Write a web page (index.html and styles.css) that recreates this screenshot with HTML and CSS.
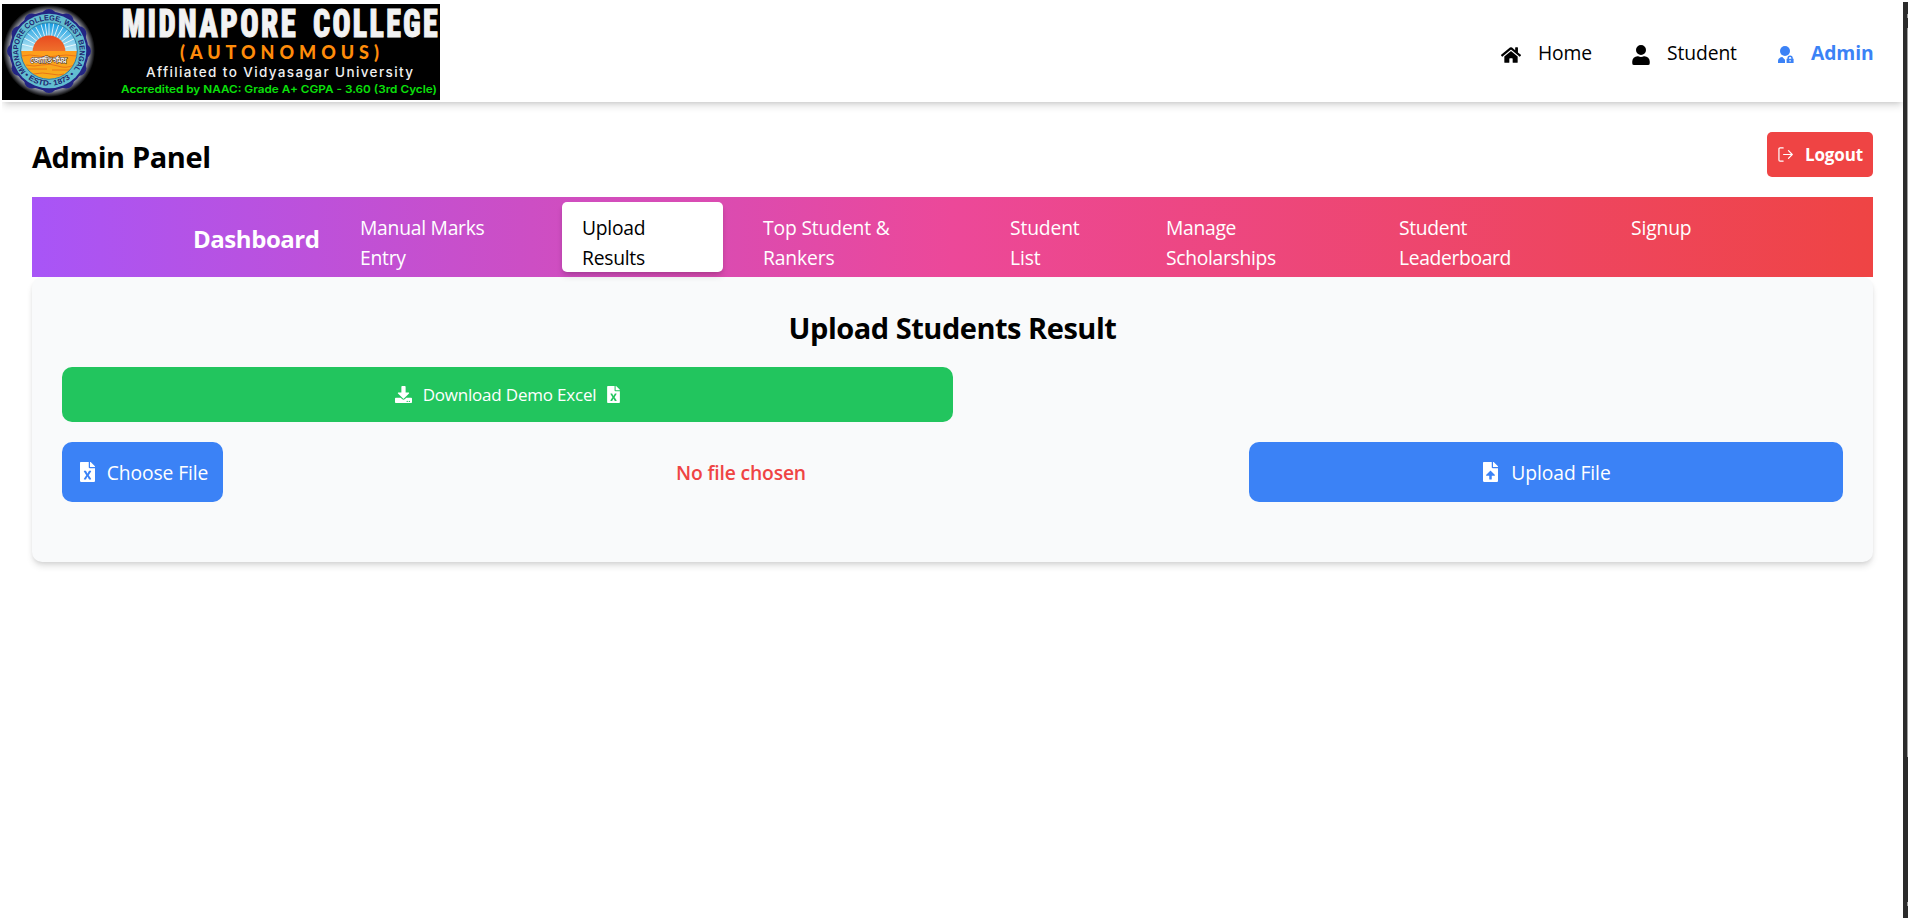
FILE: index.html
```html
<!DOCTYPE html>
<html lang="en">
<head>
<meta charset="utf-8">
<title>Admin Panel</title>
<link rel="stylesheet" href="styles.css">
</head>
<body>
<svg class="sprite" aria-hidden="true">
  <symbol id="excel" viewBox="0 0 384 512"><path fill="currentColor" d="M224 136V0H24C10.700 0 0 10.700 0 24v464c0 13.300 10.700 24 24 24h336c13.300 0 24-10.700 24-24V160H248c-13.200 0-24-10.800-24-24zm60.100 106.500L224 336l60.100 93.500c5.100 8-.6 18.500-10.100 18.500h-34.900c-4.400 0-8.500-2.400-10.600-6.300C208.900 405.500 192 373 192 373c-6.400 14.800-10 20-36.600 68.800-2.100 3.900-6.100 6.300-10.500 6.300H110c-9.500 0-15.200-10.500-10.100-18.500l60.300-93.500-60.300-93.500c-5.200-8 .6-18.500 10.100-18.500h34.800c4.400 0 8.500 2.400 10.600 6.300 26.100 48.800 20 33.600 36.600 68.500 0 0 6.100-11.700 36.600-68.500 2.100-3.900 6.200-6.300 10.600-6.300H274c9.500-.1 15.200 10.400 10.100 18.400zM384 121.900v6.100H256V0h6.100c6.400 0 12.500 2.500 17 7l97.900 98c4.500 4.500 7 10.600 7 16.900z"/></symbol>
</svg>
<div class="window">
<div class="page">
  <header class="header">
    <svg class="logo" viewBox="0 0 438 96">
      <defs>
        <radialGradient id="glow"><stop offset=".8" stop-color="#cfd3e6"/><stop offset="1" stop-color="#000"/></radialGradient>
        <linearGradient id="sky" x2="0" y2="1"><stop stop-color="#159be0"/><stop offset="1" stop-color="#bfeaf5"/></linearGradient>
        <linearGradient id="sun" x2="0" y2="1"><stop stop-color="#e84a20"/><stop offset="1" stop-color="#f79a38"/></linearGradient>
        <linearGradient id="sea" x2="0" y2="1"><stop stop-color="#ff9d1c"/><stop offset="1" stop-color="#f5b01c"/></linearGradient>
        <clipPath id="disc"><circle cx="47" cy="47" r="28"/></clipPath>
        <path id="arcTop" d="M24.100 67.500 A30.700 30.700 0 1 1 69.900 67.500"/>
        <path id="arcLow" d="M20.800 70 A35 35 0 0 0 73.200 70"/>
      </defs>
      <rect width="438" height="96" fill="#000"/>
      <circle cx="47" cy="47" r="46" fill="url(#glow)"/>
      <g fill="#232584">
        <circle cx="47" cy="47" r="39.500"/>
        <g id="lobes"><circle cx="47" cy="12.500" r="7.500"/><circle cx="64.200" cy="17.100" r="7.500"/><circle cx="76.900" cy="29.800" r="7.500"/><circle cx="81.500" cy="47" r="7.500"/><circle cx="76.900" cy="64.200" r="7.500"/><circle cx="64.200" cy="76.900" r="7.500"/></g>
        <use href="#lobes" transform="rotate(180 47 47)"/>
      </g>
      <circle cx="47" cy="47" r="37.300" fill="#62bdd0"/>
      <g clip-path="url(#disc)">
        <rect x="19" y="19" width="56" height="28" fill="url(#sky)"/>
        <path stroke="#fff" stroke-width=".8" d="M47 47L19 40M47 47L18 32M47 47L20 25M47 47L25 20M47 47L31 18M47 47L38 17M47 47L43 18M47 47L47 17M47 47L52 18M47 47L58 17M47 47L64 18M47 47L70 21M47 47L75 26M47 47L76 33M47 47L76 40"/>
        <circle cx="47" cy="48" r="16.500" fill="url(#sun)"/>
        <rect x="19" y="47" width="56" height="29" fill="url(#sea)"/>
        <path stroke="#e87517" fill="none" d="M20 52q8-2 16 0t18 0 20 0M24 61q8 2 16 0t16 1 16-1M25 65h20M50 66h19M31 70q10-2 18 0t13 0"/>
      </g>
      <circle cx="47" cy="47" r="28.300" fill="none" stroke="#236c9a" stroke-width=".8"/>
      <text class="seal-text"><textPath href="#arcTop" textLength="138" lengthAdjust="spacingAndGlyphs">MIDNAPORE COLLEGE, WEST BENGAL</textPath></text>
      <text class="seal-text"><textPath href="#arcLow" startOffset="2" textLength="56" lengthAdjust="spacingAndGlyphs">• ESTD- 1873 •</textPath></text>
      <text class="seal-motto" x="28" y="58.500" textLength="37" lengthAdjust="spacingAndGlyphs">জ্যোতির্গময়</text>
      <text class="name" x="120" y="33" textLength="176" lengthAdjust="spacingAndGlyphs">MIDNAPORE</text>
      <text class="name" x="311" y="33" textLength="127" lengthAdjust="spacingAndGlyphs">COLLEGE</text>
      <text class="auto" x="178" y="55" textLength="199" lengthAdjust="spacing">(AUTONOMOUS)</text>
      <text class="affil" x="144" y="73" textLength="267" lengthAdjust="spacing">Affiliated to Vidyasagar University</text>
      <text class="naac" x="119" y="89.200" textLength="316" lengthAdjust="spacingAndGlyphs">Accredited by NAAC: Grade A+ CGPA - 3.60 (3rd Cycle)</text>
    </svg>
    <nav class="nav">
      <a class="nav-link"><svg class="i-home" viewBox="0 0 576 512"><path fill="currentColor" d="M280.400 148.300L96 300.100V464a16 16 0 0 0 16 16l112.100-.3a16 16 0 0 0 15.900-16V368a16 16 0 0 1 16-16h64a16 16 0 0 1 16 16v95.600a16 16 0 0 0 16 16.100L464 480a16 16 0 0 0 16-16V300L295.700 148.300a12.200 12.200 0 0 0-15.300 0zM571.600 251.500L488 182.600V44.100a12 12 0 0 0-12-12h-56a12 12 0 0 0-12 12v72.600L318.500 43a48 48 0 0 0-61 0L4.300 251.500a12 12 0 0 0-1.600 16.900l25.500 31A12 12 0 0 0 45.200 301l235.200-193.700a12.200 12.200 0 0 1 15.300 0L530.900 301a12 12 0 0 0 16.900-1.600l25.500-31a12 12 0 0 0-1.700-16.900z"/></svg><span class="w-home">Home</span></a>
      <a class="nav-link"><svg class="i-user" viewBox="0 0 448 512"><path fill="currentColor" d="M224 256a128 128 0 1 0 0-256 128 128 0 0 0 0 256zm89.600 32h-16.700a174 174 0 0 1-145.800 0h-16.700A134.400 134.400 0 0 0 0 422.400V464a48 48 0 0 0 48 48h352a48 48 0 0 0 48-48v-41.600A134.400 134.400 0 0 0 313.600 288z"/></svg><span class="w-student">Student</span></a>
      <a class="nav-link current"><svg class="i-admin" viewBox="0 0 16 17"><circle cx="7" cy="5" r="5" fill="currentColor"/><path fill="currentColor" d="M0 17v-1.500C0 12.500 2 11 4.300 11L7 13.800V17z"/><path fill="currentColor" d="M8.600 12.800h.8v-.5a2.700 2.700 0 0 1 5.400 0v.5h.8V17h-7zM10.900 12.800h2.400v-.5a1.200 1.200 0 0 0-2.400 0zM11.400 14.200v1.400h1.400v-1.400z" fill-rule="evenodd"/></svg><span class="w-admin">Admin</span></a>
    </nav>
  </header>
  <main class="main">
    <div class="heading-row">
      <h1 class="title">Admin Panel</h1>
      <button class="logout"><svg class="i-out" viewBox="0 0 16 16" fill="none" stroke="currentColor" stroke-width="1.300" stroke-linecap="round" stroke-linejoin="round"><path d="M5.500 1H2.200Q1 1 1 2.200v11.600Q1 15 2.200 15h3.300M6 8h9M11.200 3.900L15.200 8l-4 4.100"/></svg><span>Logout</span></button>
    </div>
    <nav class="tabs">
      <h2 class="tabs-title">Dashboard</h2>
      <a class="tab t1">Manual Marks<br>Entry</a>
      <a class="tab t2 active">Upload<br>Results</a>
      <a class="tab t3">Top Student &amp;<br>Rankers</a>
      <a class="tab t4">Student<br>List</a>
      <a class="tab t5">Manage<br>Scholarships</a>
      <a class="tab t6">Student<br>Leaderboard</a>
      <a class="tab t7">Signup</a>
    </nav>
    <section class="panel">
      <h2 class="panel-title">Upload Students Result</h2>
      <button class="btn download"><svg class="i-down" viewBox="0 0 512 512"><path fill="currentColor" d="M216 0h80c13.300 0 24 10.700 24 24v168h87.700c17.800 0 26.700 21.500 14.100 34.100L269.700 378.300c-7.500 7.500-19.800 7.500-27.300 0L90.100 226.100C77.500 213.500 86.400 192 104.200 192H192V24c0-13.300 10.700-24 24-24zm296 376v112c0 13.300-10.700 24-24 24H24c-13.300 0-24-10.700-24-24V376c0-13.300 10.700-24 24-24h146.700l49 49c20.100 20.100 52.500 20.100 72.600 0l49-49H488c13.300 0 24 10.700 24 24zM388 464a20 20 0 1 0-40 0 20 20 0 0 0 40 0zm64 0a20 20 0 1 0-40 0 20 20 0 0 0 40 0z"/></svg><span>Download Demo Excel</span><svg class="i-xls-s"><use href="#excel"/></svg></button>
      <div class="actions">
        <button class="btn choose"><svg class="i-file"><use href="#excel"/></svg><span>Choose File</span></button>
        <span class="status">No file chosen</span>
        <button class="btn upload"><svg class="i-file" viewBox="0 0 384 512"><path fill="currentColor" fill-rule="evenodd" d="M224 136V0H24C10.700 0 0 10.700 0 24v464c0 13.300 10.700 24 24 24h336c13.300 0 24-10.700 24-24V160H248c-13.200 0-24-10.800-24-24zm65.200 216H224v80c0 8.800-7.200 16-16 16h-32c-8.800 0-16-7.200-16-16v-80H94.800c-14.300 0-21.400-17.300-11.300-27.400l96.400-95.700c6.700-6.600 17.400-6.600 24 0l96.400 95.700c10.200 10.100 3.100 27.400-11.100 27.400zM377 105L279.100 7c-4.500-4.500-10.600-7-17-7H256v128h128v-6.100c0-6.300-2.500-12.400-7-16.900z"/></svg><span>Upload File</span></button>
      </div>
    </section>
  </main>
</div>
<div class="scrollbar"><i class="cap"></i><div class="thumb"></div><i class="cap low"></i></div>
</div>
</body>
</html>
```
FILE: styles.css
```css
* { box-sizing: border-box; }
body { margin: 0; background: #fff; color: #000; font: 19.3px/30px "Open Sans", "Noto Sans", sans-serif; overflow: hidden; }
h1, h2 { margin: 0; }
button { border: 0; color: #fff; font: inherit; padding: 0; }
svg { display: block; flex: none; }
span { white-space: nowrap; }
.sprite { position: absolute; width: 0; height: 0; }
.window { display: flex; width: 1908px; height: 920px; padding: 2px 0 2px 2px; }
.page { flex: 1; overflow: hidden; }

.header { display: flex; justify-content: space-between; align-items: center; height: 100px; padding-right: 30px; background: #fff; box-shadow: 0 5px 7.5px -1px rgba(0,0,0,.13), 0 2.5px 5px -2.5px rgba(0,0,0,.13); }
.logo { width: 438px; height: 96px; overflow: visible; }
.seal-text { font: 700 7.500px "Liberation Sans", sans-serif; fill: #20246f; }
.seal-motto { font: 700 8px "Noto Sans", sans-serif; fill: #fff; stroke: #4a2c16; stroke-width: 1px; paint-order: stroke; }
.name { font: 900 39.500px "Roboto", sans-serif; font-stretch: condensed; letter-spacing: 3px; fill: #f2f2f2; stroke: #f2f2f2; stroke-width: 1px; }
.auto { font: 900 18px "Lato", sans-serif; fill: #ff8c0a; }
.affil { font: 500 13.500px "Inter", sans-serif; fill: #f0f0f0; }
.naac { font: 600 11px "Inter", sans-serif; fill: #0be00b; }

.nav { display: flex; gap: 42px; }
.nav-link { display: flex; align-items: center; }
.nav-link span { display: block; padding-top: 2px; letter-spacing: -.1px; }
.i-home { width: 20px; height: 18px; margin: 5px 17px 0 0; }
.i-user { width: 18px; height: 20px; margin: 5px 17px 0 0; }
.i-admin { width: 16px; height: 17px; margin: 4px 17px 0 0; }
.w-home { width: 52px; }
.w-student { width: 69px; }
.w-admin { width: 62px; font-weight: 700; }
.current { color: #3b82f6; }

.main { padding: 30px 30px 0; }
.heading-row { display: flex; justify-content: space-between; height: 65px; }
.title { font-size: 29px; line-height: 49px; letter-spacing: -.4px; }
.logout { display: flex; align-items: center; width: 106px; height: 45px; padding-left: 11px; gap: 12px; background: #ef4444; border-radius: 5px; font-weight: 700; font-size: 17px; letter-spacing: -.15px; }
.logout span { padding-top: 1px; }
.i-out { width: 15px; height: 15px; }

.tabs { display: flex; gap: 20px; height: 80px; padding: 5px 0 5px 161px; background: linear-gradient(90deg, #a855f7, #ec4899 50%, #ef4444); color: #fff; }
.tabs-title { width: 127px; font-size: 24px; line-height: 73px; letter-spacing: -.45px; }
.tab { padding: 11px 0 0 20px; white-space: nowrap; border-radius: 5px; letter-spacing: -.15px; }
.t1 { width: 202px; letter-spacing: -.25px; }
.t2 { width: 161px; letter-spacing: -.25px; }
.t3 { width: 227px; }
.t4 { width: 136px; }
.t5 { width: 213px; letter-spacing: -.3px; }
.t6 { width: 212px; letter-spacing: -.35px; }
.t7 { width: 150px; }
.active { background: #fff; color: #000; box-shadow: 0 5px 7.5px -1px rgba(0,0,0,.12), 0 2.5px 5px -2.5px rgba(0,0,0,.2); }

.panel { height: 285px; padding: 28px 30px 30px; background: #f9fafb; border-radius: 10px; box-shadow: 0 5px 7.5px -1px rgba(0,0,0,.12), 0 2.5px 5px -2.5px rgba(0,0,0,.12); }
.panel-title { text-align: center; font-size: 29px; line-height: 45px; letter-spacing: -.48px; }
.btn { display: flex; align-items: center; justify-content: center; border-radius: 10px; }
.download { width: 891px; height: 55px; margin: 17px 0 20px; background: #22c55e; font-size: 17px; gap: 11px; letter-spacing: -.2px; }
.i-down { width: 17px; height: 17px; }
.i-xls-s { width: 13px; height: 17px; }
.actions { display: flex; justify-content: space-between; align-items: center; height: 60px; }
.choose { width: 161px; height: 60px; padding-left: 3px; background: #3b82f6; gap: 12px; letter-spacing: -.1px; }
.upload { width: 594px; height: 60px; padding-left: 2px; background: #3b82f6; gap: 13px; letter-spacing: -.1px; }
.actions span { padding-top: 1px; }
.i-file { width: 15px; height: 20px; }
.actions .status { flex: 1; padding-left: 453px; color: #ef4444; font-weight: 600; letter-spacing: -.15px; }

.scrollbar { width: 5px; display: flex; flex-direction: column; align-items: flex-end; background: #2b2b2b; }
.thumb { width: 1px; height: 729px; margin: 10px 0 145px; background: #9f9f9f; }
.cap { width: 1px; height: 4px; margin-top: 12px; background: #9f9f9f; }
.low { margin-top: 0; }
```
